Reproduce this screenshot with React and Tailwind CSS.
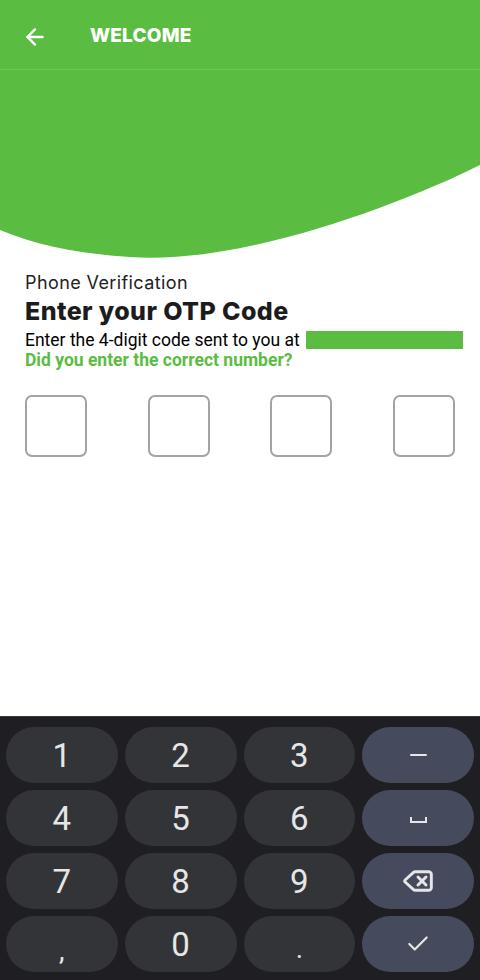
import { ArrowLeft, Delete, Check } from "lucide-react";

const GREEN = "#5abd42";

function Key({ children, special }) {
  return (
    <div
      className={
        "h-[56px] rounded-full flex items-center justify-center text-[#e6e6e8] " +
        (special ? "bg-[#454b5c]" : "bg-[#333438]")
      }
    >
      {children}
    </div>
  );
}

function Digit({ n }) {
  return (
    <Key>
      <span className="text-[33px] leading-none" style={{ fontFamily: "Roboto, sans-serif", fontWeight: 400 }}>
        {n}
      </span>
    </Key>
  );
}

export default function App() {
  return (
    <div className="min-h-[980px] w-[480px] flex flex-col bg-white">
      {/* Top bar */}
      <div className="h-[69px] bg-[#5abd42] flex items-center px-[22px] pt-[4px]">
        <ArrowLeft size={26} strokeWidth={2.2} className="text-white" />
        <h1
          className="ml-[42px] text-white text-[19px] font-extrabold tracking-[0.2px]"
          style={{ fontFamily: "Inter, sans-serif" }}
        >
          WELCOME
        </h1>
      </div>
      <div className="h-px bg-[#6bc657]" />

      {/* Wave */}
      <svg width="480" height="190" viewBox="0 0 480 190" className="block">
        <path
          d="M0 0 H480 V95 C400 135 240 195 130 187 C80 184 35 175 0 160 Z"
          fill={GREEN}
        />
      </svg>

      {/* Copy */}
      <div className="pl-[25px] pr-[17px] mt-[11px]">
        <p
          className="text-[18px] leading-[24px] text-[#222] tracking-[0.4px]"
          style={{ fontFamily: "Inter, sans-serif" }}
        >
          Phone Verification
        </p>
        <h2
          className="text-[25px] leading-[32px] font-extrabold text-[#1c1c1c] tracking-[0.4px]"
          style={{ fontFamily: "Inter, sans-serif" }}
        >
          Enter your OTP Code
        </h2>
        <div className="mt-[3px] flex items-center whitespace-nowrap" style={{ fontFamily: "Roboto, sans-serif" }}>
          <span className="text-[17.5px] leading-[20px] text-black">Enter the 4-digit code sent to you at</span>
          <span className="ml-[6px] h-[18px] w-[157px] shrink-0 bg-[#5abd42]" />
        </div>
        <p
          className="text-[17.5px] leading-[20px] font-bold text-[#5abd42]"
          style={{ fontFamily: "Roboto, sans-serif" }}
        >
          Did you enter the correct number?
        </p>
      </div>

      {/* OTP boxes */}
      <div className="mt-[25px] px-[25px] flex justify-between">
        {[0, 1, 2, 3].map((i) => (
          <div key={i} className="w-[62px] h-[62px] rounded-[7px] border-2 border-[#a3a3a3]" />
        ))}
      </div>

      <div className="flex-1" />

      {/* Numeric keyboard */}
      <div className="h-[264px] bg-[#1f1f23] border-t border-[#3a3a3e] pt-[10px] px-[6px] pb-[8px]">
        <div className="grid grid-cols-4 gap-x-[7px] gap-y-[7px]">
          <Digit n="1" />
          <Digit n="2" />
          <Digit n="3" />
          <Key special>
            <span className="block w-[17px] h-[2px] bg-[#e6e6e8] rounded" />
          </Key>
          <Digit n="4" />
          <Digit n="5" />
          <Digit n="6" />
          <Key special>
            <span className="block w-[17px] h-[6px] border-2 border-t-0 border-[#e6e6e8] mt-[4px]" />
          </Key>
          <Digit n="7" />
          <Digit n="8" />
          <Digit n="9" />
          <Key special>
            <Delete size={32} strokeWidth={2.2} />
          </Key>
          <Key>
            <span className="text-[28px] leading-none mt-[14px]" style={{ fontFamily: "Roboto, sans-serif" }}>
              ,
            </span>
          </Key>
          <Digit n="0" />
          <Key>
            <span className="text-[28px] leading-none mt-[10px]" style={{ fontFamily: "Roboto, sans-serif" }}>
              .
            </span>
          </Key>
          <Key special>
            <Check size={26} strokeWidth={2} />
          </Key>
        </div>
      </div>
    </div>
  );
}
